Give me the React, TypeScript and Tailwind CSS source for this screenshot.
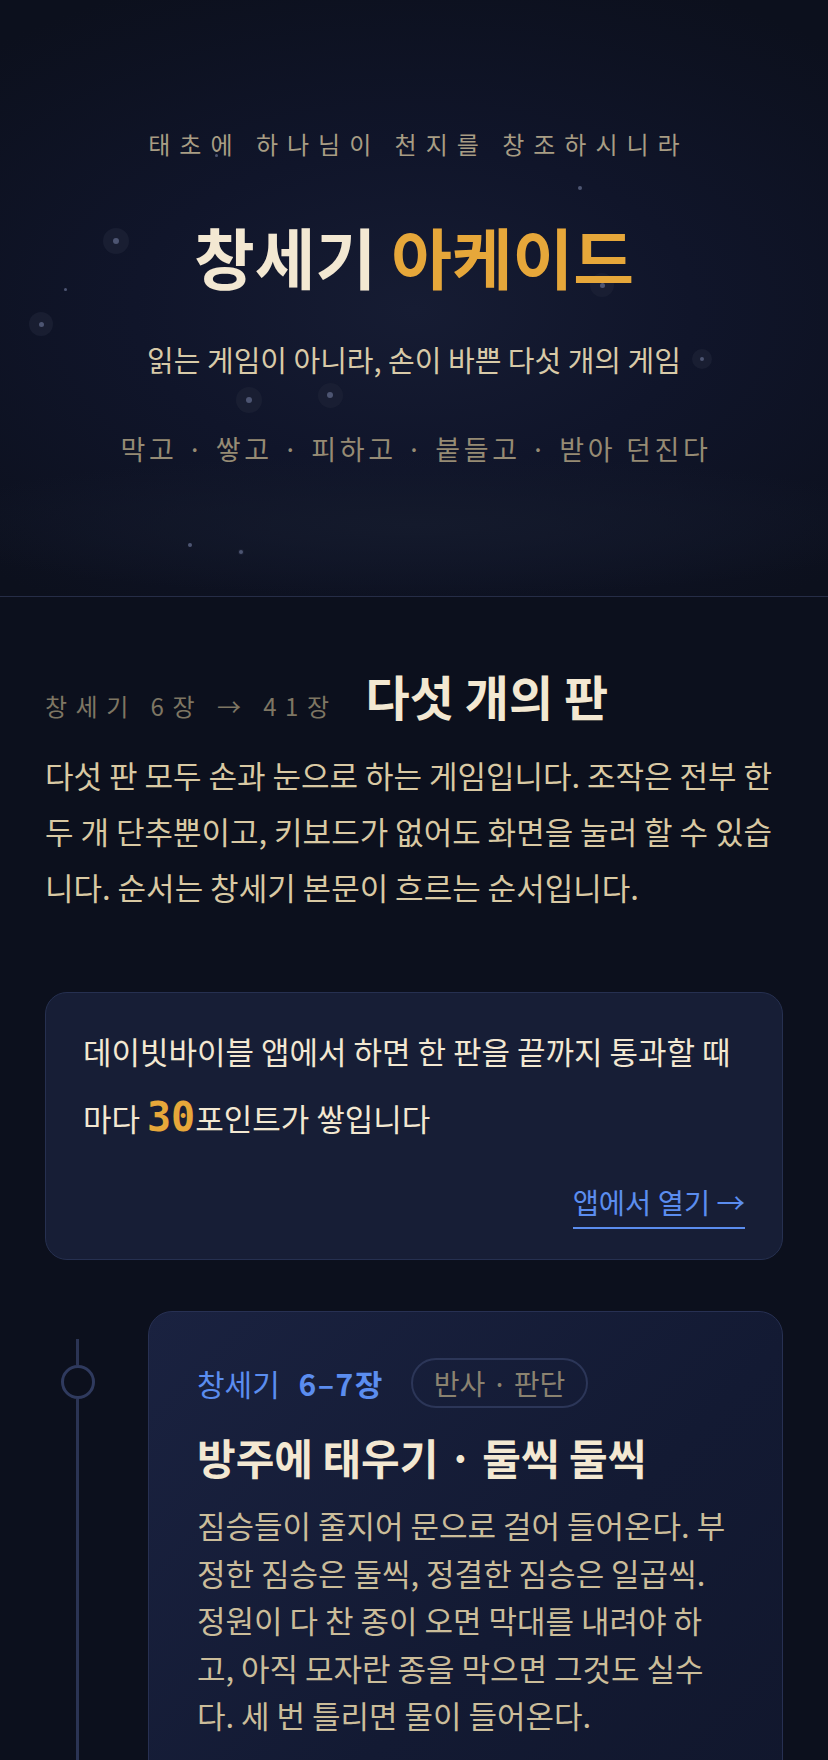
import { ReactNode } from 'react';

const stars = [
  { x: 116, y: 241, size: 26, dot: 6 },
  { x: 41, y: 324, size: 24, dot: 5 },
  { x: 249, y: 400, size: 26, dot: 6 },
  { x: 330, y: 395, size: 25, dot: 6 },
  { x: 602, y: 285, size: 24, dot: 5 },
  { x: 702, y: 359, size: 20, dot: 4 },
  { x: 580, y: 188, size: 4, dot: 4 },
  { x: 65, y: 289, size: 3, dot: 3 },
  { x: 190, y: 545, size: 4, dot: 4 },
  { x: 241, y: 552, size: 6, dot: 4 },
  { x: 216, y: 155, size: 3, dot: 3 },
];

function Star({ x, y, size, dot }: { x: number; y: number; size: number; dot: number }) {
  return (
    <div
      className="absolute flex items-center justify-center rounded-full bg-[#1b2135]/80"
      style={{ left: x - size / 2, top: y - size / 2, width: size, height: size }}
    >
      <div className="rounded-full bg-[#4d5572]" style={{ width: dot, height: dot }} />
    </div>
  );
}

function Hero() {
  return (
    <header className="relative flex h-[597px] flex-col items-center overflow-hidden border-b border-[#262d47] bg-[radial-gradient(ellipse_60%_12%_at_50%_88%,#141a2c_0%,transparent_100%),radial-gradient(ellipse_75%_60%_at_50%_52%,#161c33_0%,#10152a_45%,#0c101d_100%)]">
      {stars.map((s, i) => (
        <Star key={i} {...s} />
      ))}
      <p className="relative mt-[128px] pl-[9px] text-[24px] leading-[32px] tracking-[9px] text-[#a89d84]">
        태초에 하나님이 천지를 창조하시니라
      </p>
      <h1 className="relative mt-[57px] text-[66px] font-bold leading-[76px] text-[#f3e8d2]">
        창세기 <span className="text-[#e6a73a]">아케이드</span>
      </h1>
      <p className="relative mt-[48px] text-[29px] leading-[36px] text-[#d8caa8]">
        읽는 게임이 아니라, 손이 바쁜 다섯 개의 게임
      </p>
      <p className="relative mt-[54px] pl-[4px] text-[27px] leading-[36px] tracking-[3.7px] text-[#968b74]">
        막고 · 쌓고 · 피하고 · 붙들고 · 받아 던진다
      </p>
    </header>
  );
}

function Timeline({ children }: { children: ReactNode }) {
  return (
    <div className="mt-[51px] flex">
      <div className="flex w-[65px] shrink-0 flex-col items-center pt-[28px]">
        <div className="h-[26px] w-[3px] bg-[#2b3454]" />
        <div className="h-[34px] w-[34px] rounded-full border-[3px] border-[#2f3a5e]" />
        <div className="w-[3px] flex-1 bg-[#2b3454]" />
      </div>
      <div className="ml-[38px] flex-1">{children}</div>
    </div>
  );
}

export default function App() {
  return (
    <div className="min-h-screen bg-[#0c101d] font-['Noto_Sans_CJK_KR','Noto_Sans',sans-serif]">
      <Hero />

      <section className="px-[45px] pt-[70px] pb-[40px]">
        <div className="flex items-baseline gap-[28px]">
          <span className="text-[24px] tracking-[8.5px] text-[#7e7663]">창세기 6장 → 41장</span>
          <h2 className="text-[48px] font-bold leading-[56px] text-[#f3e8d2]">다섯 개의 판</h2>
        </div>
        <p className="mt-[23px] break-all text-[31px] leading-[56px] text-[#d9c9a3]">
          다섯 판 모두 손과 눈으로 하는 게임입니다. 조작은 전부 한 두 개 단추뿐이고, 키보드가 없어도 화면을 눌러 할 수
          있습니다. 순서는 창세기 본문이 흐르는 순서입니다.
        </p>

        {/* app points callout */}
        <div className="mt-[77px] rounded-[22px] border border-[#263050] bg-[#171e36] px-[37px] pt-[24px] pb-[30px]">
          <p className="break-all text-[31px] leading-[67px] text-[#f3e8d2]">
            데이빗바이블 앱에서 하면 한 판을 끝까지 통과할 때 마다{' '}
            <span className="font-['DejaVu_Sans_Mono',monospace] text-[40px] font-bold leading-none text-[#e6a73a]">
              30
            </span>
            포인트가 쌓입니다
          </p>
          <div className="mt-[35px] flex justify-end">
            <a className="border-b-2 border-[#5b8def] pb-[9px] text-[28.5px] leading-[32px] text-[#5b8def]">
              앱에서 열기 →
            </a>
          </div>
        </div>

        <Timeline>
          <article className="rounded-[24px] border border-[#273052] bg-[linear-gradient(135deg,#1a2240_0%,#131a33_60%,#11172d_100%)] px-[48px] pt-[46px] pb-[48px]">
            <div className="flex items-center gap-[27px]">
              <span className="text-[30px] leading-[36px] text-[#5b8def]">
                창세기 <span className="ml-[12px] font-bold tracking-[1.5px]">6–7장</span>
              </span>
              <span className="flex h-[50px] items-center rounded-full border-2 border-[#2c3658] px-[21px] text-[28px] text-[#8b8370]">
                반사 · 판단
              </span>
            </div>
            <h3 className="mt-[27px] text-[42px] font-bold leading-[44px] text-[#f3e8d2]">방주에 태우기 · 둘씩 둘씩</h3>
            <p className="mt-[22px] break-all text-[31px] leading-[47.5px] text-[#cbbd9a]">
              짐승들이 줄지어 문으로 걸어 들어온다. 부정한 짐승은 둘씩, 정결한 짐승은 일곱씩. 정원이 다 찬 종이 오면 막대를
              내려야 하고, 아직 모자란 종을 막으면 그것도 실수다. 세 번 틀리면 물이 들어온다.
            </p>
          </article>
        </Timeline>
      </section>
    </div>
  );
}
